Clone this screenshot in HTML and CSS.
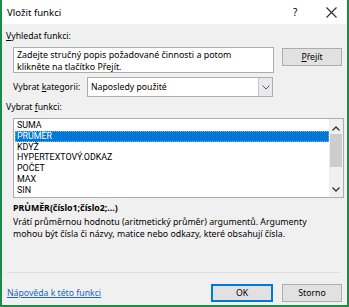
FILE: index.html
```html
<!DOCTYPE html>
<html lang="cs">
<head>
<meta charset="utf-8">
<title>Vložit funkci</title>
<link rel="stylesheet" href="styles.css">
</head>
<body>
<div class="window">
  <div class="titlebar">
    <span class="title">Vložit funkci</span>
    <span class="help">?</span>
    <svg class="close" width="11" height="11" viewBox="0 0 11 11"><path d="M0.5 0.5 L10.5 10.5 M10.5 0.5 L0.5 10.5" stroke="#2b2b2b" stroke-width="1.1" fill="none"/></svg>
  </div>
  <div class="content">
    <div class="label"><u>V</u>yhledat funkci:</div>
    <div class="row search-row">
      <div class="textbox">Zadejte stručný popis požadované činnosti a potom klikněte na tlačítko Přejít.</div>
      <div class="btn go"><u>P</u>řejít</div>
    </div>
    <div class="row cat-row">
      <span class="cat-label">Vybrat <u>k</u>ategorii:</span>
      <div class="select">
        <span class="select-text">Naposledy použité</span>
        <span class="select-arrow"><svg width="8" height="5" viewBox="0 0 8 5"><path d="M0.5 0.5 L4 4 L7.5 0.5" stroke="#4a5a6a" stroke-width="1" fill="none"/></svg></span>
      </div>
    </div>
    <div class="label fn-label">Vybrat <u>f</u>unkci:</div>
    <div class="listbox">
      <ul class="items">
        <li>SUMA</li>
        <li class="selected">PRŮMĚR</li>
        <li>KDYŽ</li>
        <li>HYPERTEXTOVÝ.ODKAZ</li>
        <li>POČET</li>
        <li>MAX</li>
        <li>SIN</li>
      </ul>
      <div class="scrollbar">
        <svg class="sb-up" width="8" height="5" viewBox="0 0 8 5"><path d="M0.5 4.5 L4 1 L7.5 4.5" stroke="#333" stroke-width="1.3" fill="none"/></svg>
        <div class="thumb"></div>
        <svg class="sb-down" width="8" height="5" viewBox="0 0 8 5"><path d="M0.5 0.5 L4 4 L7.5 0.5" stroke="#333" stroke-width="1.3" fill="none"/></svg>
      </div>
    </div>
    <div class="syntax">PRŮMĚR(číslo1;číslo2;...)</div>
    <div class="desc">Vrátí průměrnou hodnotu (aritmetický průměr) argumentů. Argumenty mohou být čísla či názvy, matice nebo odkazy, které obsahují čísla.</div>
    <div class="separator"></div>
    <div class="row footer">
      <a class="help-link" href="#">Nápověda k této funkci</a>
      <div class="btn ok">OK</div>
      <div class="btn cancel">Storno</div>
    </div>
  </div>
</div>
</body>
</html>
```
FILE: styles.css
```css
* { box-sizing: border-box; }
html, body { margin: 0; padding: 0; }
body {
  width: 349px;
  height: 307px;
  font-family: "Noto Sans", "Open Sans", sans-serif;
  font-size: 8.7px;
  color: #000;
  background: #f0f0f0;
  overflow: hidden;
}
u { text-decoration: underline; text-underline-offset: 1px; }
.window {
  width: 349px;
  height: 307px;
  border-left: 2px solid #1c8b4a;
  border-right: 2px solid #1c8b4a;
  border-bottom: 2px solid #1c8b4a;
  display: flex;
  flex-direction: column;
}
.titlebar {
  height: 24px;
  background: #fff;
  display: flex;
  align-items: center;
  padding-left: 5px;
  flex: none;
}
.title { font-size: 9.6px; flex: 1; }
.help { font-size: 10px; width: 33px; }
.close { margin-right: 10px; }
.content {
  flex: 1;
  display: flex;
  flex-direction: column;
  padding: 6px 3px 0 4px;
  line-height: 12px;
}
.label { height: 12px; }
.row { display: flex; }
.search-row { margin-top: 5px; padding-left: 7px; }
.textbox {
  width: 261px;
  height: 26px;
  background: #fff;
  border: 1px solid #adadad;
  padding: 1px 10px 1px 3px;
  line-height: 11.5px;
  font-size: 8.9px;
}
.btn {
  background: #e1e1e1;
  border: 1px solid #adadad;
  display: flex;
  align-items: center;
  justify-content: center;
  height: 18px;
}
.go { width: 60px; margin-left: 8px; margin-top: 1px; }
.cat-row { margin-top: 4px; padding-left: 7px; align-items: center; height: 20px; }
.cat-label { width: 74px; }
.select {
  width: 186px;
  height: 20px;
  background: #fff;
  border: 1px solid #adadad;
  display: flex;
}
.select-text { flex: 1; padding-left: 3px; line-height: 18px; }
.select-arrow {
  width: 14px;
  border-left: 1px solid #c8c8c8;
  background: #eaeaea;
  display: flex;
  align-items: center;
  justify-content: center;
}
.fn-label { margin-top: 4px; }
.listbox {
  margin: 5px 0 0 7px;
  width: 331px;
  height: 80px;
  background: #fff;
  border: 1px solid #adadad;
  display: flex;
  overflow: hidden;
}
.items {
  list-style: none;
  margin: 0;
  padding: 1px 0 0 1px;
  flex: 1;
  font-family: Roboto, "Noto Sans", sans-serif;
  font-size: 8.9px;
}
.items li { height: 10.8px; line-height: 10.8px; padding-left: 2px; }
.items li.selected { background: #0078d7; color: #fff; outline: 1px dotted #7fb5e6; outline-offset: -1px; }
.scrollbar {
  width: 14px;
  background: #f0f0f0;
  display: flex;
  flex-direction: column;
  align-items: center;
  padding-top: 7px;
}
.thumb { width: 12px; height: 33px; background: #cdcdcd; margin-top: 3px; }
.sb-down { margin-top: 20px; }
.syntax { font-weight: bold; margin: 4px 0 0 7px; font-size: 8.8px; }
.desc { margin: 2px 0 0 7px; width: 320px; font-size: 8.8px; }
.separator { height: 1px; background: #dcdcdc; margin: 32px 5px 0 1px; }
.footer { margin-top: 11px; align-items: center; }
.help-link { flex: 1; color: #1a66c0; text-decoration: underline; padding-left: 1px; }
.ok { width: 62px; border: 2px solid #0078d7; }
.cancel { width: 60px; margin-left: 9px; margin-right: 2px; }
```
